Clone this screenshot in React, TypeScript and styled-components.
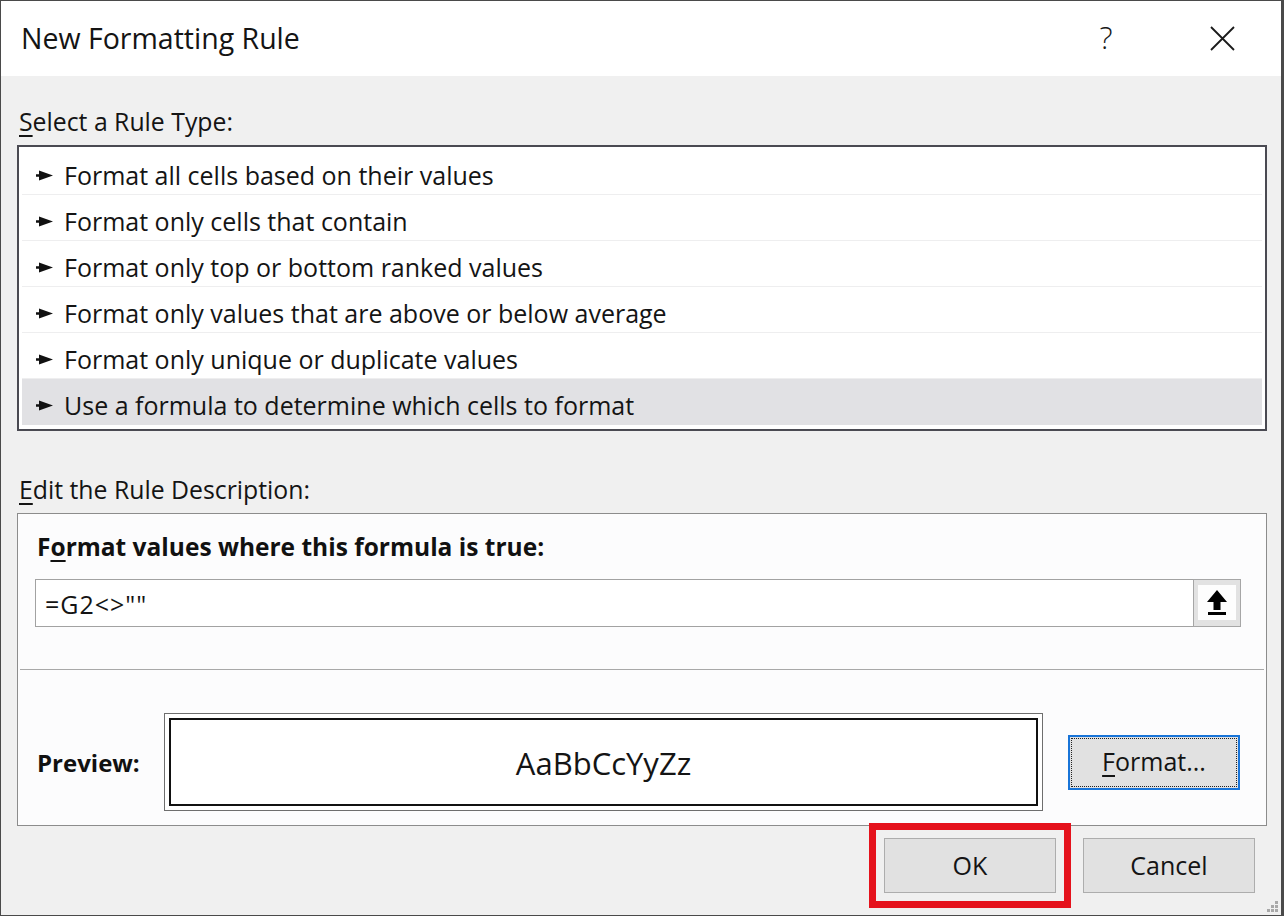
import React from "react";
import styled, { createGlobalStyle } from "styled-components";

const Global = createGlobalStyle`
  html, body { margin: 0; padding: 0; background: #f0f0f0; }
  body { font-family: "Open Sans", "Noto Sans", sans-serif; color: #111; }
  * { box-sizing: border-box; }
`;

const Dialog = styled.div`
  width: 1284px;
  height: 916px;
  border: 1px solid #4a4a4a;
  border-right-width: 3px;
  background: #f0f0f0;
  display: flex;
  flex-direction: column;
  position: relative;
  overflow: hidden;
`;

const TitleBar = styled.div`
  height: 75px;
  background: #ffffff;
  display: flex;
  align-items: center;
  padding: 0 46px 0 20px;
`;

const Title = styled.div`
  flex: 1;
  font-size: 28.5px;
  color: #141414;
  padding-bottom: 2px;
`;

const HelpMark = styled.div`
  font-size: 31px;
  font-weight: 300;
  color: #1a1a1a;
  width: 60px;
  margin-right: 74px;
  text-align: center;
  padding-bottom: 3px;
`;

const CloseIcon = styled.svg`
  width: 25px;
  height: 25px;
  margin-bottom: 1px;
`;

const Body = styled.div`
  flex: 1;
  display: flex;
  flex-direction: column;
  padding: 0 14px 0 16px;
`;

const SectionLabel = styled.div<{ $top: number }>`
  margin-top: ${(p) => p.$top}px;
  margin-bottom: 9px;
  height: 30px;
  line-height: 30px;
  font-size: 24.8px;
  padding-left: 2px;
  color: #141414;
`;

const Key = styled.span`
  text-decoration: underline;
  text-underline-offset: 4px;
  text-decoration-thickness: 2px;
`;

const ListBox = styled.div`
  height: 286px;
  border: 2px solid #4a4a52;
  background: #ffffff;
  padding: 2px 3px;
  display: flex;
  flex-direction: column;
`;

const Row = styled.div<{ $selected?: boolean }>`
  height: 46px;
  flex: none;
  border-bottom: 1px solid ${(p) => (p.$selected ? "transparent" : "#eeeeef")};
  background: ${(p) => (p.$selected ? "#e1e1e4" : "transparent")};
  display: flex;
  align-items: center;
  padding: 7px 0 0 14px;
  font-size: 25px;
  color: #141414;
`;

const Arrow = styled.svg`
  width: 17px;
  height: 11px;
  margin-right: 11px;
  flex: none;
`;

const DescBox = styled.div`
  height: 313px;
  border: 1px solid #8c8c8c;
  background: #fcfcfd;
  display: flex;
  flex-direction: column;
`;

const Heading = styled.div`
  margin-top: 18px;
  height: 30px;
  line-height: 30px;
  font-size: 24.5px;
  font-weight: 700;
  padding-left: 19px;
  color: #111;
`;

const FormulaRow = styled.div`
  margin: 17px 25px 0 17px;
  height: 48px;
  display: flex;
`;

const FormulaInput = styled.div`
  flex: 1;
  border: 1px solid #a2a2a2;
  border-right: none;
  background: #ffffff;
  display: flex;
  align-items: center;
  padding: 2px 0 0 9px;
  font-size: 25px;
  letter-spacing: 1px;
  color: #141414;
`;

const CollapseButton = styled.div`
  width: 48px;
  height: 48px;
  border: 1px solid #a6a6a6;
  background: #e2e2e2;
  padding: 5px 4px 6px 4px;
`;

const CollapseInner = styled.div`
  width: 100%;
  height: 100%;
  background: #fdfdfd;
  display: flex;
  align-items: center;
  justify-content: center;
`;

const Divider = styled.div`
  margin: 42px 2px 0 2px;
  height: 1px;
  background: #a8a8a8;
`;

const PreviewRow = styled.div`
  margin: 43px 0 0 0;
  height: 98px;
  display: flex;
  align-items: center;
`;

const PreviewLabel = styled.div`
  width: 146px;
  padding-left: 19px;
  font-size: 24px;
  font-weight: 700;
  color: #111;
`;

const PreviewFrame = styled.div`
  width: 879px;
  height: 98px;
  border: 1px solid #6e6e6e;
  padding: 4px;
  background: #ffffff;
`;

const PreviewInner = styled.div`
  height: 100%;
  border: 2px solid #111;
  display: flex;
  align-items: center;
  justify-content: center;
  font-size: 31px;
  color: #141414;
  padding-top: 2px;
`;

const Button = styled.div<{ $focused?: boolean }>`
  width: 172px;
  height: 55px;
  background: #e1e1e1;
  border: ${(p) => (p.$focused ? "2px solid #1874d8" : "1px solid #adadad")};
  padding: ${(p) => (p.$focused ? "2px" : "0")};
  font-size: 25px;
  color: #141414;
  display: flex;
`;

const ButtonFace = styled.div<{ $focused?: boolean }>`
  flex: 1;
  display: flex;
  align-items: center;
  justify-content: center;
  padding-bottom: 2px;
  outline: ${(p) => (p.$focused ? "1px dotted #222" : "none")};
`;

const FormatButtonSlot = styled.div`
  margin-left: 25px;
`;

const Footer = styled.div`
  display: flex;
  justify-content: flex-end;
  align-items: center;
  margin-top: 12px;
  padding-right: 12px;
  gap: 27px;
`;

const Highlight = styled.div`
  outline: 7px solid #e5121c;
  outline-offset: 8px;
`;

const Grip = styled.svg`
  position: absolute;
  right: 2px;
  bottom: 2px;
  width: 14px;
  height: 14px;
`;

const rules = [
  "Format all cells based on their values",
  "Format only cells that contain",
  "Format only top or bottom ranked values",
  "Format only values that are above or below average",
  "Format only unique or duplicate values",
  "Use a formula to determine which cells to format",
];

export default function App() {
  return (
    <>
      <Global />
      <Dialog>
        <TitleBar>
          <Title>New Formatting Rule</Title>
          <HelpMark>?</HelpMark>
          <CloseIcon viewBox="0 0 25 25">
            <path d="M1 1 L24 24 M24 1 L1 24" stroke="#1a1a1a" strokeWidth="1.8" fill="none" />
          </CloseIcon>
        </TitleBar>
        <Body>
          <SectionLabel $top={30}>
            <Key>S</Key>elect a Rule Type:
          </SectionLabel>
          <ListBox>
            {rules.map((r, i) => (
              <Row key={r} $selected={i === rules.length - 1}>
                <Arrow viewBox="0 0 17 11">
                  <path d="M0 4.2 L3 4.2 L3 0.5 L17 5.5 L3 10.5 L3 6.8 L0 6.8 Z" fill="#111" />
                </Arrow>
                {r}
              </Row>
            ))}
          </ListBox>
          <SectionLabel $top={43}>
            <Key>E</Key>dit the Rule Description:
          </SectionLabel>
          <DescBox>
            <Heading>
              F<Key>o</Key>rmat values where this formula is true:
            </Heading>
            <FormulaRow>
              <FormulaInput>=G2&lt;&gt;""</FormulaInput>
              <CollapseButton>
                <CollapseInner>
                  <svg width="22" height="28" viewBox="0 0 22 28">
                    <path d="M11 1 L21 13 L14.5 13 L14.5 21 L7.5 21 L7.5 13 L1 13 Z" fill="#000" />
                    <rect x="2" y="23" width="18" height="3" fill="#000" />
                  </svg>
                </CollapseInner>
              </CollapseButton>
            </FormulaRow>
            <Divider />
            <PreviewRow>
              <PreviewLabel>Preview:</PreviewLabel>
              <PreviewFrame>
                <PreviewInner>AaBbCcYyZz</PreviewInner>
              </PreviewFrame>
              <FormatButtonSlot>
                <Button $focused>
                  <ButtonFace $focused>
                    <Key>F</Key>ormat...
                  </ButtonFace>
                </Button>
              </FormatButtonSlot>
            </PreviewRow>
          </DescBox>
          <Footer>
            <Highlight>
              <Button>
                <ButtonFace>OK</ButtonFace>
              </Button>
            </Highlight>
            <Button>
              <ButtonFace>Cancel</ButtonFace>
            </Button>
          </Footer>
        </Body>
        <Grip viewBox="0 0 14 14">
          <rect x="10" y="2" width="3" height="3" fill="#a8a8a8" />
          <rect x="6" y="6" width="3" height="3" fill="#a8a8a8" />
          <rect x="10" y="6" width="3" height="3" fill="#a8a8a8" />
          <rect x="2" y="10" width="3" height="3" fill="#a8a8a8" />
          <rect x="6" y="10" width="3" height="3" fill="#a8a8a8" />
          <rect x="10" y="10" width="3" height="3" fill="#a8a8a8" />
        </Grip>
      </Dialog>
    </>
  );
}
